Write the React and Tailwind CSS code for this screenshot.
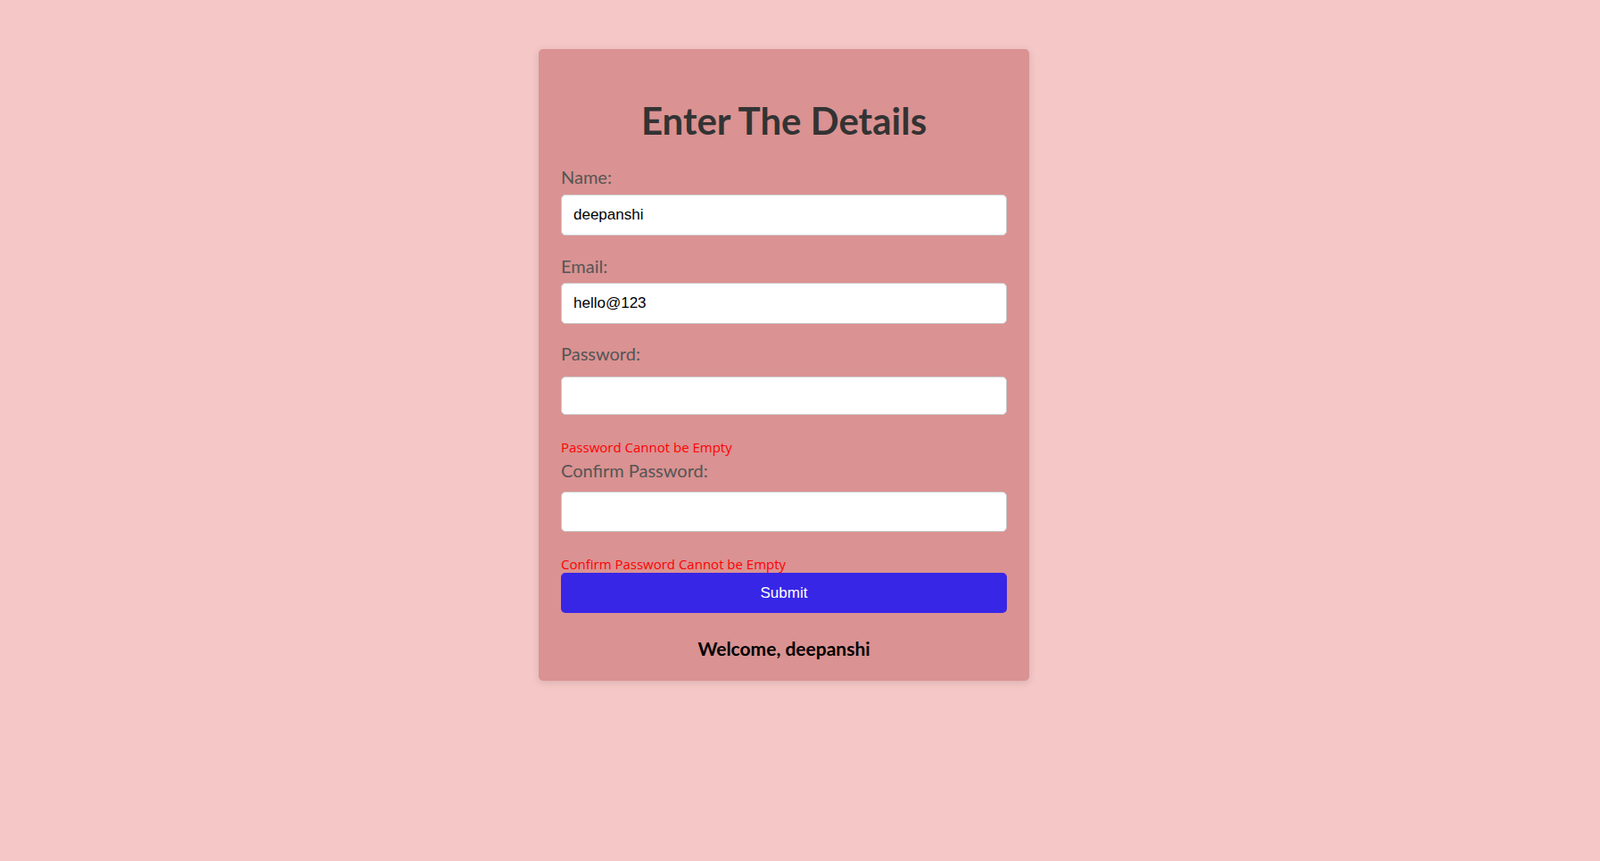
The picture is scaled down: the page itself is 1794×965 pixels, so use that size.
import { useState } from 'react'

const LABEL = 'block text-[20px] leading-[24px] text-[#555]'
const INPUT =
  'block w-full rounded-[5px] border border-[#ccc] bg-white px-[13px] text-[17px] text-black outline-none'
const ERROR = 'block font-["Open_Sans",sans-serif] text-[15px] leading-[18px] text-[#ff0000]'

export default function App() {
  const [name, setName] = useState('deepanshi')
  const [email, setEmail] = useState('hello@123')
  const [password, setPassword] = useState('')
  const [confirm, setConfirm] = useState('')

  return (
    <div
      className="min-h-[965px] bg-[#f5c7c7] pr-[36px] pt-[55px]"
      style={{ fontFamily: 'Lato, "Open Sans", sans-serif' }}
    >
      <form
        className="mx-auto w-[550px] rounded-[5px] bg-[#da9292] px-[25px] pb-[24px] pt-[56px] shadow-[0_2px_8px_rgba(0,0,0,0.12)]"
        onSubmit={(e) => e.preventDefault()}
      >
        <h1 className="text-center text-[42px] font-bold leading-[48px] text-[#333]">
          Enter The Details
        </h1>

        <label className={`${LABEL} mt-[27px]`}>Name:</label>
        <input
          className={`${INPUT} mt-[8px] h-[46px]`}
          style={{ fontFamily: '"Liberation Sans", Arial, sans-serif' }}
          value={name}
          onChange={(e) => setName(e.target.value)}
        />

        <label className={`${LABEL} mt-[22px]`}>Email:</label>
        <input
          className={`${INPUT} mt-[7px] h-[46px]`}
          style={{ fontFamily: '"Liberation Sans", Arial, sans-serif' }}
          value={email}
          onChange={(e) => setEmail(e.target.value)}
        />

        <label className={`${LABEL} mt-[21px]`}>Password:</label>
        <input
          type="password"
          className={`${INPUT} mt-[14px] h-[43px]`}
          value={password}
          onChange={(e) => setPassword(e.target.value)}
        />
        <span className={`${ERROR} mt-[27px]`}>Password Cannot be Empty</span>

        <label className={`${LABEL} mt-[5px]`}>Confirm Password:</label>
        <input
          type="password"
          className={`${INPUT} mt-[12px] h-[45px]`}
          value={confirm}
          onChange={(e) => setConfirm(e.target.value)}
        />
        <span className={`${ERROR} mt-[27px]`}>Confirm Password Cannot be Empty</span>

        <button
          type="submit"
          className="mt-[1px] block h-[45px] w-full rounded-[5px] bg-[#3726e6] text-[17px] text-white"
          style={{ fontFamily: '"Liberation Sans", Arial, sans-serif' }}
        >
          Submit
        </button>

        <p className="mt-[28px] text-center text-[21px] font-bold leading-[24px] text-black">
          Welcome, {name}
        </p>
      </form>
    </div>
  )
}
